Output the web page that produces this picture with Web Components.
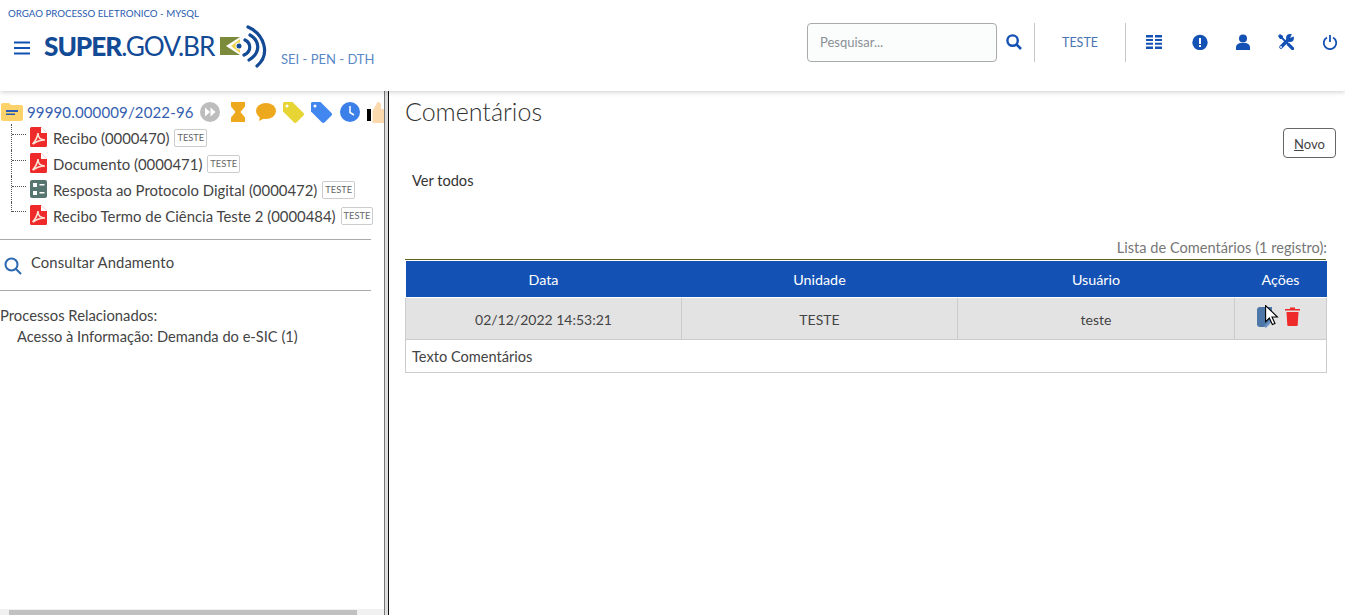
<!DOCTYPE html>
<html>
<head>
<meta charset="utf-8">
<style>
  html, body { margin: 0; height: 100%; overflow: hidden; background: #fff; }
  body { font-family: Lato, "Open Sans", sans-serif; color: #333; }
  sei-page { height: 615px; }
</style>
</head>
<body>
<sei-page>
  <sei-header slot="top"></sei-header>
  <sei-tree slot="side"></sei-tree>
  <sei-comments slot="main"></sei-comments>
</sei-page>

<script>
const BLUE = '#1351b4';

class SeiPage extends HTMLElement {
  constructor(self) {
    self = super(self);
    self.attachShadow({ mode: 'open' }).innerHTML = `
      <style>
        :host { display: flex; flex-direction: column; }
        .body { flex: 1; display: flex; min-height: 0; }
        .side { width: 384px; flex: none; }
        .bar { width: 5px; flex: none; border-left: 1px solid #777; border-right: 1px solid #111; background: #ddd; box-sizing: border-box; }
        .main { flex: 1; min-width: 0; }
      </style>
      <slot name="top"></slot>
      <div class="body">
        <div class="side"><slot name="side"></slot></div>
        <div class="bar"></div>
        <div class="main"><slot name="main"></slot></div>
      </div>`;
    return self;
  }
}
customElements.define('sei-page', SeiPage);

class SeiHeader extends HTMLElement {
  constructor(self) {
    self = super(self);
    self.attachShadow({ mode: 'open' }).innerHTML = `
      <style>
        :host { display: flex; height: 91px; box-sizing: border-box; justify-content: space-between; box-shadow: 0 1px 5px rgba(0,0,0,.2); position: relative; z-index: 2; background: #fff; color: ${BLUE}; }
        .left { padding-top: 7px; }
        .org { font-size: 9.7px; line-height: 12px; margin-left: 8px; color: #2a5bb0; }
        .brand { display: flex; align-items: flex-start; margin-top: 5px; }
        .burger { width: 16px; margin: 17px 0 0 14px; height: 14px; flex: none; }
        .logo { margin-left: 14px; font-size: 26.2px; line-height: 44px; color: #124a96; letter-spacing: -1.05px; white-space: nowrap; height: 46px; width: 169px; }
        .logo b { font-weight: 900; }
        .flag { margin: 0 0 0 6px; flex: none; }
        .sys { font-size: 13px; margin: 27px 0 0 12px; color: #5a88c6; line-height: 16px; white-space: nowrap; }
        .right { display: flex; align-items: flex-start; padding-top: 23px; padding-right: 7px; }
        .search { width: 190px; height: 39px; box-sizing: border-box; border: 1px solid #aaa; border-radius: 4px; background: #fbfdfd; color: #8a8f96; font-size: 13px; line-height: 37px; padding-left: 12px; }
        .mag { margin: 11px 12px 0 9px; }
        .sep { width: 1px; height: 39px; background: #c8c8c8; }
        .unit { width: 90px; text-align: center; font-size: 12.5px; line-height: 40px; color: #4a74b0; }
        .icons { display: flex; margin-left: 20px; gap: 28px; padding-top: 11px; }
        svg { display: block; }
      </style>
      <div class="left">
        <div class="org">ORGAO PROCESSO ELETRONICO - MYSQL</div>
        <div class="brand">
          <svg class="burger" viewBox="0 0 16 14"><path d="M0 1.500h16M0 7h16M0 12.500h16" stroke="${BLUE}" stroke-width="2.200"/></svg>
          <div class="logo"><b>SUPER</b>.GOV.BR</div>
          <svg class="flag" width="50" height="44" viewBox="0 0 50 44">
            <rect x="1" y="13" width="20" height="18" fill="#7c8a3c"/>
            <path d="M21 13 L7 22 L21 31 Z" fill="#fff"/>
            <path d="M21 15 L12 22 L21 29 Z" fill="#efd44f"/>
            <circle cx="20" cy="22" r="3.400" fill="#fff"/>
            <circle cx="20" cy="22" r="2.500" fill="#124a96"/>
            <path d="M29 3 C45 10 52 30 38 42M31 11 C40 16 43 28 30 36M26 16 C32 19 33 27 25 31" fill="none" stroke="#124a96" stroke-width="3.200" stroke-linecap="round"/>
          </svg>
          <div class="sys">SEI - PEN - DTH</div>
        </div>
      </div>
      <div class="right">
        <div class="search">Pesquisar...</div>
        <svg class="mag" width="16" height="16" viewBox="0 0 16 16"><circle cx="6.600" cy="6.600" r="5.200" fill="none" stroke="${BLUE}" stroke-width="2.400"/><path d="M10.500 10.500L15 15" stroke="${BLUE}" stroke-width="2.600"/></svg>
        <div class="sep"></div>
        <div class="unit">TESTE</div>
        <div class="sep"></div>
        <div class="icons">
          <svg width="16" height="16" viewBox="0 0 16 16" fill="${BLUE}"><path d="M0 1h7v2.400H0zM9 1h7v2.400H9zM0 5h7v2H0zM9 5h7v2H9zM0 8.800h7v2H0zM9 8.800h7v2H9zM0 12.600h7v2.400H0zM9 12.600h7v2.400H9z"/></svg>
          <svg style="margin:0 -2px 0 2px" width="16" height="16" viewBox="0 0 16 16"><circle cx="8" cy="8.500" r="7.700" fill="${BLUE}"/><path d="M7 4h2v6H7zM7 11h2v2H7z" fill="#fff"/></svg>
          <svg style="margin:0 -1px 0 1px" width="16" height="16" viewBox="0 0 16 16" fill="${BLUE}"><circle cx="8" cy="4.500" r="4"/><path d="M1 16v-2.500C1 10.500 3.500 9 6 9h4c2.500 0 5 1.500 5 4.500V16z"/></svg>
          <svg width="16" height="16" viewBox="0 0 16 16">
            <path d="M0 2L2 0l3 2v3H2z" fill="${BLUE}"/>
            <path d="M4 4l6 6" stroke="${BLUE}" stroke-width="1.800"/>
            <path d="M8.500 10.800l2.300-2.300 5 5a1.600 1.600 0 0 1-2.300 2.300z" fill="${BLUE}"/>
            <path d="M3 13L10.500 5.500" stroke="${BLUE}" stroke-width="3.600" stroke-linecap="round"/>
            <circle cx="12" cy="4" r="3.900" fill="${BLUE}"/>
            <path d="M12 4L14.500-1H18V1.500z" fill="#fff"/>
            <circle cx="3" cy="13" r=".9" fill="#fff"/>
          </svg>
          <svg width="16" height="16" viewBox="0 0 16 16" fill="none" stroke="${BLUE}" stroke-width="1.800"><path d="M5 3.500a6.200 6.200 0 1 0 6 0"/><path d="M8 1v7"/></svg>
        </div>
      </div>`;
    return self;
  }
}
customElements.define('sei-header', SeiHeader);

const PDF = `<svg style="display:block" width="17" height="20" viewBox="0 0 17 20"><path d="M0 1.500A1.500 1.500 0 0 1 1.500 0H11l6 6v12.500a1.500 1.500 0 0 1-1.500 1.500h-14A1.500 1.500 0 0 1 0 18.500z" fill="#ee2a2a"/><path d="M11 0v6h6z" fill="#fff"/><path d="M2.500 17C5 15 8 9 8 6C8 11 11 13 15 13C11 13 7 14 3 17" fill="none" stroke="#fbe3d6" stroke-width="1.600"/></svg>`;
const FORM = `<svg style="display:block" width="17" height="20" viewBox="0 0 17 20"><rect y="1" width="17" height="18" rx="2" fill="#56756f"/><path d="M3 4h4v4H3zM3 12h4v4H3zM9.500 5h5v1.500h-5zM9.500 13h5v1.500h-5z" fill="#fff"/></svg>`;

class TreeDoc extends HTMLElement {
  constructor(self) {
    self = super(self);
    const icon = self.getAttribute('icon') === 'form' ? FORM : PDF;
    self.attachShadow({ mode: 'open' }).innerHTML = `
      <style>
        :host { display: flex; align-items: center; height: 26px; margin-left: 11px; }
        .v { width: 15px; height: 26px; flex: none; border-left: 1px dotted #555; box-sizing: border-box; }
        :host([last]) .v { height: 10px; align-self: flex-start; }
        .v::after { content: ""; display: block; margin-top: 10px; border-top: 1px dotted #555; }
        :host([last]) .v::after { margin-top: 9px; }
        .ic { margin: 0 6px 0 4px; flex: none; }
        .t { font-size: 14.9px; color: #444; white-space: nowrap; margin-top: 1px; }
        .tag { margin-left: 5px; border: 1px solid #ccc; border-radius: 2px; font-size: 9.3px; line-height: 16px; padding: 0 2px; color: #666; margin-top: 2px; white-space: nowrap; }
      </style>
      <span class="v"></span><span class="ic">${icon}</span>
      <span class="t"><slot></slot></span><span class="tag">TESTE</span>`;
    return self;
  }
}
customElements.define('tree-doc', TreeDoc);

class SeiTree extends HTMLElement {
  constructor(self) {
    self = super(self);
    self.attachShadow({ mode: 'open' }).innerHTML = `
      <style>
        :host { display: flex; flex-direction: column; height: 100%; overflow: hidden; font-size: 14.8px; position: relative; color: #444; }
        .root { display: flex; align-items: center; height: 22px; margin-top: 10px; white-space: nowrap; overflow: hidden; }
        .folder { margin: 0 4px 0 1px; flex: none; }
        .num { color: #3560b0; font-size: 15px; letter-spacing: .14px; }
        .root svg { flex: none; }
        .docs { margin-top: 1px; }
        hr { border: 0; height: 1px; background: #aaa; width: 371px; margin: 0; flex: none; }
        .cons { display: flex; height: 50px; align-items: center; box-sizing: border-box; padding-left: 4px; flex: none; }
        .cons span { margin-left: 9px; margin-top: -6px; letter-spacing: .1px; }
        .rel { margin-top: 14px; line-height: 21px; }
        .rel div { padding-left: 17px; font-size: 14.65px; }
        .scroll { position: absolute; left: 0; right: 0; bottom: 0; height: 6px; background: #f1f1f1; }
        .thumb { margin-left: 9px; width: 348px; height: 5px; margin-top: 1px; background: #c1c1c1; }
      </style>
      <div class="root">
        <svg class="folder" width="22" height="18" viewBox="0 0 22 18"><path d="M0 2a2 2 0 0 1 2-2h6l2 2h10a2 2 0 0 1 2 2v12a2 2 0 0 1-2 2H2a2 2 0 0 1-2-2z" fill="#fdd26a"/><path d="M5 7h12v2H5zM5 10.500h9v1.500H5z" fill="#2a5bb0"/></svg>
        <span class="num">99990.000009/2022-96</span>
        <svg style="margin-left:6px" width="20" height="20" viewBox="0 0 20 20"><circle cx="10" cy="10" r="10" fill="#bdbdbd"/><path d="M5 5.500l5 4.500-5 4.500zM10.500 5.500l5 4.500-5 4.500z" fill="#fff"/></svg>
        <svg style="margin-left:11px" width="14" height="20" viewBox="0 0 14 20"><path d="M0 0h14v4.500L9.500 10 14 15.500V20H0v-4.500L4.500 10 0 4.500z" fill="#eea81d"/></svg>
        <svg style="margin-left:11px" width="20" height="19" viewBox="0 0 20 19"><ellipse cx="10" cy="8" rx="10" ry="8" fill="#eea81d"/><path d="M4 13l-1 5 6-3z" fill="#eea81d"/></svg>
        <svg style="margin-left:7px" width="21" height="21" viewBox="0 0 21 21"><path d="M1 0h8.500L20.500 11a2 2 0 0 1 0 2.500L13.500 20.500a2 2 0 0 1-2.500 0L0 9.500V1z" fill="#e7d536"/><circle cx="4" cy="4" r="1.500" fill="#fff"/></svg>
        <svg style="margin-left:7px" width="21" height="21" viewBox="0 0 21 21"><path d="M1 0h8.500L20.500 11a2 2 0 0 1 0 2.500L13.500 20.500a2 2 0 0 1-2.500 0L0 9.500V1z" fill="#4286f0"/><circle cx="4" cy="4" r="1.500" fill="#fff"/></svg>
        <svg style="margin-left:8px" width="20" height="20" viewBox="0 0 20 20"><circle cx="10" cy="10" r="10" fill="#3b80e8"/><path d="M10 4v6.500l4 2.500" fill="none" stroke="#fff" stroke-width="1.500"/></svg>
        <svg style="margin-left:7px" width="24" height="21" viewBox="0 0 24 21"><rect y="7" width="4" height="12" fill="#000"/><path d="M5.500 9l5-9c2 0 3.500 1 3.500 3v4h10v14H5.500z" fill="#fbd9ac"/></svg>
      </div>
      <div class="docs">
        <tree-doc>Recibo (0000470)</tree-doc>
        <tree-doc>Documento (0000471)</tree-doc>
        <tree-doc icon="form">Resposta ao Protocolo Digital (0000472)</tree-doc>
        <tree-doc last>Recibo Termo de Ciência Teste 2 (0000484)</tree-doc>
      </div>
      <hr style="margin-top:11px">
      <div class="cons">
        <svg style="margin-top:2px" width="18" height="18" viewBox="0 0 18 18"><circle cx="7.500" cy="7.500" r="6" fill="none" stroke="#2a67b0" stroke-width="2"/><path d="M12 12l5 5" stroke="#2a67b0" stroke-width="2"/></svg>
        <span>Consultar Andamento</span>
      </div>
      <hr>
      <div class="rel">Processos Relacionados:<div>Acesso à Informação: Demanda do e-SIC (1)</div></div>
      <div class="scroll"><div class="thumb"></div></div>`;
    return self;
  }
}
customElements.define('sei-tree', SeiTree);

class SeiComments extends HTMLElement {
  constructor(self) {
    self = super(self);
    self.attachShadow({ mode: 'open' }).innerHTML = `
      <style>
        :host { display: block; padding: 0 9px 0 16px; height: 100%; box-sizing: border-box; position: relative; font-size: 14.6px; color: #444; }
        h1 { margin: 0; font-weight: 300; font-size: 25px; line-height: 30px; padding-top: 5px; color: #333; }
        .tools { display: flex; justify-content: flex-end; margin-top: 2px; }
        .btn { width: 53px; height: 30px; box-sizing: border-box; border: 1px solid #666; border-radius: 4px; font-size: 13px; line-height: 30px; text-align: center; color: #444; }
        .all { margin: 6px 0 0 7px; line-height: 34px; height: 34px; color: #333; }
        .cap { margin: 40px 9px 0 0; text-align: right; color: #777; line-height: 20px; height: 21px; }
        .rule { height: 1px; background: #5c6420; margin-bottom: 1px; width: 921px; }
        table { border-collapse: collapse; width: 921px; table-layout: fixed; }
        th { background: ${BLUE}; color: #fff; font-weight: 400; height: 36px; padding: 0; border-bottom: 1px solid #fff; font-size: 14.3px; }
        td { height: 42px; padding: 1px 0 0; box-sizing: border-box; background: #e3e3e3; text-align: center; border: 1px solid #ccc; font-size: 14px; }
        td.txt { background: #fff; text-align: left; height: 33px; padding: 0 0 0 6px; font-size: 14.6px; }
        .acts { display: flex; justify-content: center; gap: 8px; padding-right: 5px; margin-top: -3px; }
        .acts svg { display: block; }
        .cursor { position: absolute; left: 876px; top: 214px; }
      </style>
      <h1>Comentários</h1>
      <div class="tools"><div class="btn"><u>N</u>ovo</div></div>
      <div class="all">Ver todos</div>
      <div class="cap">Lista de Comentários (1 registro):</div>
      <div class="rule"></div>
      <table>
        <colgroup><col style="width:276px"><col style="width:276px"><col style="width:277px"><col style="width:92px"></colgroup>
        <thead><tr><th>Data</th><th>Unidade</th><th>Usuário</th><th>Ações</th></tr></thead>
        <tbody>
          <tr><td>02/12/2022 14:53:21</td><td>TESTE</td><td>teste</td><td><div class="acts">
            <svg width="20" height="21" viewBox="0 0 20 21"><path d="M3 0h12v12l-7 8H3a3 3 0 0 1-3-3V3a3 3 0 0 1 3-3z" fill="#4d77a8"/><path d="M8 20l8-8" stroke="#6d94c0" stroke-width="2.500"/></svg>
            <svg width="15" height="19" viewBox="0 0 15 19" fill="#ee2a2a"><path d="M0 2h5V.5h5V2h5v1.500H0zM1.500 5h12l-.8 13a1 1 0 0 1-1 1H3.300a1 1 0 0 1-1-1z"/></svg>
          </div></td></tr>
          <tr><td class="txt" colspan="4">Texto Comentários</td></tr>
        </tbody>
      </table>
      <svg class="cursor" width="14" height="21" viewBox="0 0 14 21"><path d="M.6.6v16l3.800-3.600 3 6.600 2.600-1.200-3-6.400h5.400z" fill="#fff" stroke="#000" stroke-width="1.100"/></svg>`;
    return self;
  }
}
customElements.define('sei-comments', SeiComments);
</script>
</body>
</html>
